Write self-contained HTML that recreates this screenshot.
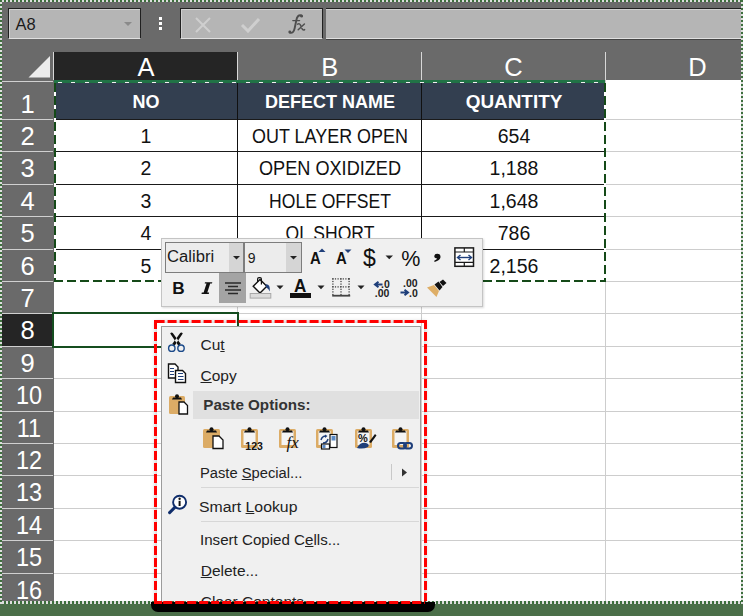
<!DOCTYPE html>
<html><head><meta charset="utf-8">
<style>
*{margin:0;padding:0;box-sizing:border-box}
html,body{width:743px;height:616px;overflow:hidden;background:#4b6f49;font-family:"Liberation Sans",sans-serif}
.a{position:absolute}
#shot{position:absolute;left:0;top:0;width:743px;height:604px;background:#6a6a6a;overflow:hidden}
</style></head><body>
<div id="shot">
<div class="a" style="left:2px;top:2px;width:739px;height:50px;background:#6a6a6a;"></div>
<div class="a" style="left:8px;top:8px;width:133px;height:31px;background:#b5b5b5;border:1px solid #202020;border-bottom:1px solid #e0e0e0;box-shadow:inset 1px 1px 0 #cfcfcf"></div>
<div class="a" style="left:15.50px;top:16.03px;font-size:16.5px;line-height:16.5px;color:#1a1a1a;font-weight:400;white-space:nowrap;">A8</div>
<svg class="a" style="left:123px;top:21px" width="10" height="6"><polygon points="1,1 9,1 5,5" fill="#8a8a8a"/></svg>
<div class="a" style="left:158.8px;top:16.5px;width:3.4px;height:3.4px;background:#ffffff;"></div>
<div class="a" style="left:158.8px;top:21.8px;width:3.4px;height:3.4px;background:#ffffff;"></div>
<div class="a" style="left:158.8px;top:27px;width:3.4px;height:3.4px;background:#ffffff;"></div>
<div class="a" style="left:180px;top:8px;width:143px;height:31px;background:#b5b5b5;border:1px solid #202020;border-bottom:1px solid #e0e0e0;box-shadow:inset 1px 1px 0 #cfcfcf"></div>
<svg class="a" style="left:194px;top:17px" width="18" height="16"><path d="M2,1 L16,15 M16,1 L2,15" stroke="#cfcfcf" stroke-width="2"/></svg>
<svg class="a" style="left:240px;top:17px" width="21" height="16"><path d="M2,8 L8,14 L19,2" stroke="#cfcfcf" stroke-width="3" fill="none"/></svg>
<svg class="a" style="left:284px;top:12px" width="24" height="24"><g fill="none" stroke="#4e4e4e" stroke-linecap="round"><path d="M17.6,3.4 C14.5,2.4 12.8,5 12.3,8.5 L10.6,16.5 C9.9,19.8 8.4,21.6 5.6,20.6" stroke-width="1.9"/><path d="M8.8,8.6 H15.6" stroke-width="1.3"/><path d="M13.6,12.2 Q15.6,11 16.6,13.4 L18.2,16.8 Q19.2,18.6 20.6,17.6 M20.4,12 L14.2,17.8" stroke-width="1.5"/></g><circle cx="17.6" cy="4.2" r="1.4" fill="#4e4e4e"/><circle cx="5.8" cy="19.8" r="1.4" fill="#4e4e4e"/></svg>
<div class="a" style="left:326px;top:8px;width:415px;height:31px;background:#b5b5b5;border-top:1px solid #202020;border-bottom:1px solid #e0e0e0;box-shadow:inset 0 1px 0 #cfcfcf"></div>
<div class="a" style="left:326px;top:39px;width:415px;height:1px;background:#444;"></div>
<div class="a" style="left:2px;top:52px;width:739px;height:28px;background:#6a6a6a;"></div>
<div class="a" style="left:54px;top:52px;width:183px;height:28px;background:#252525;"></div>
<div class="a" style="left:53px;top:52px;width:1px;height:28px;background:#d8d8d8;"></div>
<div class="a" style="left:237px;top:52px;width:1px;height:28px;background:#d8d8d8;"></div>
<div class="a" style="left:421px;top:52px;width:1px;height:28px;background:#d8d8d8;"></div>
<div class="a" style="left:605px;top:52px;width:1px;height:28px;background:#d8d8d8;"></div>
<div class="a" style="left:-54.00px;top:54.81px;width:400px;text-align:center;font-size:25.5px;line-height:25.5px;color:#ffffff;font-weight:400;white-space:nowrap;">A</div>
<div class="a" style="left:129.80px;top:54.81px;width:400px;text-align:center;font-size:25.5px;line-height:25.5px;color:#ffffff;font-weight:400;white-space:nowrap;">B</div>
<div class="a" style="left:313.50px;top:54.81px;width:400px;text-align:center;font-size:25.5px;line-height:25.5px;color:#ffffff;font-weight:400;white-space:nowrap;">C</div>
<div class="a" style="left:497.50px;top:54.81px;width:400px;text-align:center;font-size:25.5px;line-height:25.5px;color:#ffffff;font-weight:400;white-space:nowrap;">D</div>
<svg class="a" style="left:24px;top:55px" width="28" height="25"><polygon points="26,1 26,22.5 4.5,22.5" fill="#ececec"/></svg>
<div class="a" style="left:2px;top:80px;width:51px;height:524px;background:#6a6a6a;"></div>
<div class="a" style="left:2px;top:81px;width:51px;height:1px;background:#d0d0d0;"></div>
<div class="a" style="left:54px;top:80px;width:687px;height:524px;background:#ffffff;"></div>
<div class="a" style="left:-172.50px;top:91.61px;width:400px;text-align:center;font-size:25.5px;line-height:25.5px;color:#ffffff;font-weight:400;white-space:nowrap;">1</div>
<div class="a" style="left:2px;top:119px;width:51px;height:1px;background:#d0d0d0;"></div>
<div class="a" style="left:54px;top:119px;width:687px;height:1px;background:#cdcdcd;"></div>
<div class="a" style="left:-172.50px;top:124.01px;width:400px;text-align:center;font-size:25.5px;line-height:25.5px;color:#ffffff;font-weight:400;white-space:nowrap;">2</div>
<div class="a" style="left:2px;top:151px;width:51px;height:1px;background:#d0d0d0;"></div>
<div class="a" style="left:54px;top:151px;width:687px;height:1px;background:#cdcdcd;"></div>
<div class="a" style="left:-172.50px;top:156.41px;width:400px;text-align:center;font-size:25.5px;line-height:25.5px;color:#ffffff;font-weight:400;white-space:nowrap;">3</div>
<div class="a" style="left:2px;top:184px;width:51px;height:1px;background:#d0d0d0;"></div>
<div class="a" style="left:54px;top:184px;width:687px;height:1px;background:#cdcdcd;"></div>
<div class="a" style="left:-172.50px;top:188.81px;width:400px;text-align:center;font-size:25.5px;line-height:25.5px;color:#ffffff;font-weight:400;white-space:nowrap;">4</div>
<div class="a" style="left:2px;top:216px;width:51px;height:1px;background:#d0d0d0;"></div>
<div class="a" style="left:54px;top:216px;width:687px;height:1px;background:#cdcdcd;"></div>
<div class="a" style="left:-172.50px;top:221.21px;width:400px;text-align:center;font-size:25.5px;line-height:25.5px;color:#ffffff;font-weight:400;white-space:nowrap;">5</div>
<div class="a" style="left:2px;top:249px;width:51px;height:1px;background:#d0d0d0;"></div>
<div class="a" style="left:54px;top:249px;width:687px;height:1px;background:#cdcdcd;"></div>
<div class="a" style="left:-172.50px;top:253.61px;width:400px;text-align:center;font-size:25.5px;line-height:25.5px;color:#ffffff;font-weight:400;white-space:nowrap;">6</div>
<div class="a" style="left:2px;top:281px;width:51px;height:1px;background:#d0d0d0;"></div>
<div class="a" style="left:54px;top:281px;width:687px;height:1px;background:#cdcdcd;"></div>
<div class="a" style="left:-172.50px;top:286.01px;width:400px;text-align:center;font-size:25.5px;line-height:25.5px;color:#ffffff;font-weight:400;white-space:nowrap;">7</div>
<div class="a" style="left:2px;top:313px;width:51px;height:1px;background:#d0d0d0;"></div>
<div class="a" style="left:54px;top:313px;width:687px;height:1px;background:#cdcdcd;"></div>
<div class="a" style="left:2px;top:314px;width:50px;height:32px;background:#252525;"></div>
<div class="a" style="left:-172.50px;top:318.41px;width:400px;text-align:center;font-size:25.5px;line-height:25.5px;color:#ffffff;font-weight:400;white-space:nowrap;">8</div>
<div class="a" style="left:2px;top:346px;width:51px;height:1px;background:#d0d0d0;"></div>
<div class="a" style="left:54px;top:346px;width:687px;height:1px;background:#cdcdcd;"></div>
<div class="a" style="left:-172.50px;top:350.81px;width:400px;text-align:center;font-size:25.5px;line-height:25.5px;color:#ffffff;font-weight:400;white-space:nowrap;">9</div>
<div class="a" style="left:2px;top:378px;width:51px;height:1px;background:#d0d0d0;"></div>
<div class="a" style="left:54px;top:378px;width:687px;height:1px;background:#cdcdcd;"></div>
<div class="a" style="left:-171.50px;top:383.21px;width:400px;text-align:center;font-size:25.5px;line-height:25.5px;color:#ffffff;font-weight:400;white-space:nowrap;transform:scaleX(0.92);transform-origin:center 0;">10</div>
<div class="a" style="left:2px;top:411px;width:51px;height:1px;background:#d0d0d0;"></div>
<div class="a" style="left:54px;top:411px;width:687px;height:1px;background:#cdcdcd;"></div>
<div class="a" style="left:-171.50px;top:415.61px;width:400px;text-align:center;font-size:25.5px;line-height:25.5px;color:#ffffff;font-weight:400;white-space:nowrap;transform:scaleX(0.92);transform-origin:center 0;">11</div>
<div class="a" style="left:2px;top:443px;width:51px;height:1px;background:#d0d0d0;"></div>
<div class="a" style="left:54px;top:443px;width:687px;height:1px;background:#cdcdcd;"></div>
<div class="a" style="left:-171.50px;top:448.01px;width:400px;text-align:center;font-size:25.5px;line-height:25.5px;color:#ffffff;font-weight:400;white-space:nowrap;transform:scaleX(0.92);transform-origin:center 0;">12</div>
<div class="a" style="left:2px;top:475px;width:51px;height:1px;background:#d0d0d0;"></div>
<div class="a" style="left:54px;top:475px;width:687px;height:1px;background:#cdcdcd;"></div>
<div class="a" style="left:-171.50px;top:480.41px;width:400px;text-align:center;font-size:25.5px;line-height:25.5px;color:#ffffff;font-weight:400;white-space:nowrap;transform:scaleX(0.92);transform-origin:center 0;">13</div>
<div class="a" style="left:2px;top:508px;width:51px;height:1px;background:#d0d0d0;"></div>
<div class="a" style="left:54px;top:508px;width:687px;height:1px;background:#cdcdcd;"></div>
<div class="a" style="left:-171.50px;top:512.81px;width:400px;text-align:center;font-size:25.5px;line-height:25.5px;color:#ffffff;font-weight:400;white-space:nowrap;transform:scaleX(0.92);transform-origin:center 0;">14</div>
<div class="a" style="left:2px;top:540px;width:51px;height:1px;background:#d0d0d0;"></div>
<div class="a" style="left:54px;top:540px;width:687px;height:1px;background:#cdcdcd;"></div>
<div class="a" style="left:-171.50px;top:545.21px;width:400px;text-align:center;font-size:25.5px;line-height:25.5px;color:#ffffff;font-weight:400;white-space:nowrap;transform:scaleX(0.92);transform-origin:center 0;">15</div>
<div class="a" style="left:2px;top:573px;width:51px;height:1px;background:#d0d0d0;"></div>
<div class="a" style="left:54px;top:573px;width:687px;height:1px;background:#cdcdcd;"></div>
<div class="a" style="left:-171.50px;top:577.61px;width:400px;text-align:center;font-size:25.5px;line-height:25.5px;color:#ffffff;font-weight:400;white-space:nowrap;transform:scaleX(0.92);transform-origin:center 0;">16</div>
<div class="a" style="left:2px;top:605px;width:51px;height:1px;background:#d0d0d0;"></div>
<div class="a" style="left:54px;top:605px;width:687px;height:1px;background:#cdcdcd;"></div>
<div class="a" style="left:237px;top:80px;width:1px;height:524px;background:#cdcdcd;"></div>
<div class="a" style="left:421px;top:80px;width:1px;height:524px;background:#cdcdcd;"></div>
<div class="a" style="left:605px;top:80px;width:1px;height:524px;background:#cdcdcd;"></div>
<div class="a" style="left:54px;top:80px;width:551px;height:39px;background:#333f50;"></div>
<div class="a" style="left:54px;top:119px;width:551px;height:1px;background:#1a1a1a;"></div>
<div class="a" style="left:54px;top:151px;width:551px;height:1px;background:#1a1a1a;"></div>
<div class="a" style="left:54px;top:184px;width:551px;height:1px;background:#1a1a1a;"></div>
<div class="a" style="left:54px;top:216px;width:551px;height:1px;background:#1a1a1a;"></div>
<div class="a" style="left:54px;top:249px;width:551px;height:1px;background:#1a1a1a;"></div>
<div class="a" style="left:237px;top:80px;width:1px;height:201px;background:#111;"></div>
<div class="a" style="left:421px;top:80px;width:1px;height:201px;background:#111;"></div>
<div class="a" style="left:-54.00px;top:92.56px;width:400px;text-align:center;font-size:18px;line-height:18px;color:#ffffff;font-weight:700;white-space:nowrap;">NO</div>
<div class="a" style="left:130.00px;top:92.56px;width:400px;text-align:center;font-size:18px;line-height:18px;color:#ffffff;font-weight:700;white-space:nowrap;">DEFECT NAME</div>
<div class="a" style="left:314.30px;top:92.56px;width:400px;text-align:center;font-size:18px;line-height:18px;color:#ffffff;font-weight:700;white-space:nowrap;transform:scaleX(1.05);transform-origin:center 0;">QUANTITY</div>
<div class="a" style="left:-54.00px;top:126.99px;width:400px;text-align:center;font-size:19.5px;line-height:19.5px;color:#111;font-weight:400;white-space:nowrap;">1</div>
<div class="a" style="left:130.00px;top:126.99px;width:400px;text-align:center;font-size:19.5px;line-height:19.5px;color:#111;font-weight:400;white-space:nowrap;transform:scaleX(0.92);transform-origin:center 0;">OUT LAYER OPEN</div>
<div class="a" style="left:314.00px;top:126.99px;width:400px;text-align:center;font-size:19.5px;line-height:19.5px;color:#111;font-weight:400;white-space:nowrap;">654</div>
<div class="a" style="left:-54.00px;top:159.39px;width:400px;text-align:center;font-size:19.5px;line-height:19.5px;color:#111;font-weight:400;white-space:nowrap;">2</div>
<div class="a" style="left:130.00px;top:159.39px;width:400px;text-align:center;font-size:19.5px;line-height:19.5px;color:#111;font-weight:400;white-space:nowrap;transform:scaleX(0.93);transform-origin:center 0;">OPEN OXIDIZED</div>
<div class="a" style="left:314.00px;top:159.39px;width:400px;text-align:center;font-size:19.5px;line-height:19.5px;color:#111;font-weight:400;white-space:nowrap;">1,188</div>
<div class="a" style="left:-54.00px;top:191.79px;width:400px;text-align:center;font-size:19.5px;line-height:19.5px;color:#111;font-weight:400;white-space:nowrap;">3</div>
<div class="a" style="left:130.00px;top:191.79px;width:400px;text-align:center;font-size:19.5px;line-height:19.5px;color:#111;font-weight:400;white-space:nowrap;transform:scaleX(0.9);transform-origin:center 0;">HOLE OFFSET</div>
<div class="a" style="left:314.00px;top:191.79px;width:400px;text-align:center;font-size:19.5px;line-height:19.5px;color:#111;font-weight:400;white-space:nowrap;">1,648</div>
<div class="a" style="left:-54.00px;top:224.19px;width:400px;text-align:center;font-size:19.5px;line-height:19.5px;color:#111;font-weight:400;white-space:nowrap;">4</div>
<div class="a" style="left:130.00px;top:224.19px;width:400px;text-align:center;font-size:19.5px;line-height:19.5px;color:#111;font-weight:400;white-space:nowrap;transform:scaleX(0.9);transform-origin:center 0;">OL SHORT</div>
<div class="a" style="left:314.00px;top:224.19px;width:400px;text-align:center;font-size:19.5px;line-height:19.5px;color:#111;font-weight:400;white-space:nowrap;">786</div>
<div class="a" style="left:-54.00px;top:256.59px;width:400px;text-align:center;font-size:19.5px;line-height:19.5px;color:#111;font-weight:400;white-space:nowrap;">5</div>
<div class="a" style="left:130.00px;top:256.59px;width:400px;text-align:center;font-size:19.5px;line-height:19.5px;color:#111;font-weight:400;white-space:nowrap;transform:scaleX(0.9);transform-origin:center 0;">OL SHORT</div>
<div class="a" style="left:314.00px;top:256.59px;width:400px;text-align:center;font-size:19.5px;line-height:19.5px;color:#111;font-weight:400;white-space:nowrap;">2,156</div>
<div class="a" style="left:54px;top:80px;width:551px;height:3px;background:#217346"></div>
<div class="a" style="left:54px;top:82px;width:551px;height:1px;background:repeating-linear-gradient(90deg,transparent 0 4px,#f0f0f0 4px 8px,transparent 8px 13.4px)"></div>
<div class="a" style="left:54px;top:83px;width:2px;height:199px;background:repeating-linear-gradient(180deg,#154a18 0 9.5px,#ffffff 9.5px 13px)"></div>
<div class="a" style="left:604px;top:83px;width:2px;height:199px;background:repeating-linear-gradient(180deg,#154a18 0 9.5px,#ffffff 9.5px 13px)"></div>
<div class="a" style="left:54px;top:280px;width:552px;height:2px;background:repeating-linear-gradient(90deg,#154a18 0 9.5px,#ffffff 9.5px 13px)"></div>
<div class="a" style="left:52px;top:312px;width:187px;height:36px;border:2px solid #154d1f"></div>
<div class="a" style="left:161px;top:238px;width:322px;height:69px;background:#f0f0f0;border:1px solid #c4c4c4;box-shadow:1px 1px 2px rgba(0,0,0,0.15)"></div>
<div class="a" style="left:165px;top:242px;width:79px;height:31px;background:#ececec;border:1px solid #7d7d7d"></div>
<div class="a" style="left:229px;top:243px;width:14px;height:29px;background:#d5d5d5;"></div>
<svg class="a" style="left:232px;top:255px" width="9" height="6"><polygon points="1,1 8,1 4.5,4.5" fill="#222"/></svg>
<div class="a" style="left:167.30px;top:249.46px;font-size:16px;line-height:16px;color:#1a1a1a;font-weight:400;white-space:nowrap;transform:scaleX(1.04);transform-origin:left 0;">Calibri</div>
<div class="a" style="left:244px;top:242px;width:58px;height:31px;background:#ececec;border:1px solid #7d7d7d"></div>
<div class="a" style="left:286px;top:243px;width:15px;height:29px;background:#d5d5d5;"></div>
<svg class="a" style="left:289px;top:255px" width="9" height="6"><polygon points="1,1 8,1 4.5,4.5" fill="#222"/></svg>
<div class="a" style="left:247.80px;top:250.95px;font-size:14px;line-height:14px;color:#1a1a1a;font-weight:400;white-space:nowrap;">9</div>
<div class="a" style="left:310.00px;top:250.66px;font-size:16px;line-height:16px;color:#111;font-weight:700;white-space:nowrap;transform:scaleX(0.93);transform-origin:left 0;">A</div>
<svg class="a" style="left:318px;top:248px" width="8" height="5"><polygon points="0.5,4 7.5,4 4,0.5" fill="#1f3f7a"/></svg>
<div class="a" style="left:336.20px;top:251.06px;font-size:16px;line-height:16px;color:#111;font-weight:700;white-space:nowrap;transform:scaleX(0.93);transform-origin:left 0;">A</div>
<svg class="a" style="left:344px;top:249px" width="8" height="5"><polygon points="0.5,0.5 7.5,0.5 4,4" fill="#1f3f7a"/></svg>
<div class="a" style="left:363.00px;top:247.03px;font-size:23px;line-height:23px;color:#111;font-weight:400;white-space:nowrap;">$</div>
<svg class="a" style="left:385px;top:255px" width="9" height="5"><polygon points="0.5,0.5 8,0.5 4.25,4.2" fill="#222"/></svg>
<div class="a" style="left:401.30px;top:248.60px;font-size:21.5px;line-height:21.5px;color:#111;font-weight:400;white-space:nowrap;">%</div>
<svg class="a" style="left:432px;top:253px" width="10" height="10"><path d="M5,0.8 Q8.8,0.6 8.5,4.2 Q8.1,7.4 2.6,8.9 L2.2,7.8 Q5,6.6 5.2,5.5 Q2.1,5.3 2.3,3 Q2.6,0.9 5,0.8 Z" fill="#111"/></svg>
<svg class="a" style="left:454px;top:247px" width="21" height="21"><rect x="0.9" y="0.9" width="18.6" height="18.4" fill="#fff" stroke="#1a1a1a" stroke-width="1.5"/><path d="M1,5 H20 M1,15.3 H20 M10.3,1 V5 M10.3,15.3 V20" stroke="#1a1a1a" stroke-width="1.2"/><path d="M4,10.5 H17" stroke="#1f3f7a" stroke-width="1.4"/><path d="M6.5,8 L3.5,10.5 L6.5,13 M14.5,8 L17.5,10.5 L14.5,13" stroke="#1f3f7a" stroke-width="1.4" fill="none"/></svg>
<div class="a" style="left:172.30px;top:279.64px;font-size:17.2px;line-height:17.2px;color:#111;font-weight:700;white-space:nowrap;">B</div>
<svg class="a" style="left:200px;top:281px" width="13" height="15"><path d="M5,1.2 H12.3 L12,2.6 H10.2 L7.3,11.6 H9.1 L8.8,13 H1.5 L1.8,11.6 H3.6 L6.5,2.6 H4.7 Z" fill="#111"/></svg>
<div class="a" style="left:219px;top:273px;width:27px;height:30px;background:#a4a4a4;"></div>
<svg class="a" style="left:224px;top:281px" width="18" height="14"><path d="M1,2 H17 M4,5.5 H14 M1,9 H17 M4,12.5 H14" stroke="#2a2a2a" stroke-width="1.5"/></svg>
<svg class="a" style="left:249px;top:276px" width="23" height="24"><path d="M11,3.5 L17.8,10.2 L11,17 L4.2,10.2 Z" fill="#fff" stroke="#111" stroke-width="1.4"/><path d="M8.6,6 L8.6,3 Q8.6,1.6 10,1.6 L11,1.6 Q12.4,1.6 12.4,3 L12.4,8.5" fill="none" stroke="#111" stroke-width="1.2"/><path d="M16.5,8.2 Q21.5,7.5 20.8,15.5 Q19.5,12.5 17.2,11.5 Z" fill="#1f3f7a"/><rect x="1.2" y="17.5" width="20.6" height="4.6" fill="#dcdcdc" stroke="#a8a8a8" stroke-width="1"/></svg>
<svg class="a" style="left:276px;top:285px" width="9" height="5"><polygon points="0.5,0.5 7.5,0.5 4,4.3" fill="#222"/></svg>
<div class="a" style="left:294.20px;top:276.76px;font-size:18px;line-height:18px;color:#111;font-weight:700;white-space:nowrap;transform:scaleX(0.95);transform-origin:left 0;">A</div>
<div class="a" style="left:290px;top:293px;width:21px;height:5px;background:#111;"></div>
<svg class="a" style="left:317px;top:285px" width="9" height="5"><polygon points="0.5,0.5 7.5,0.5 4,4.3" fill="#222"/></svg>
<svg class="a" style="left:332px;top:278px" width="19" height="19"><g fill="#333"><rect x="0.3" y="0.3" width="1.2" height="1.2"/><rect x="0.3" y="0.3" width="1.2" height="1.2"/><rect x="16.5" y="0.3" width="1.2" height="1.2"/><rect x="0.3" y="8.3" width="1.2" height="1.2"/><rect x="8.4" y="0.3" width="1.2" height="1.2"/><rect x="2.9" y="0.3" width="1.2" height="1.2"/><rect x="0.3" y="2.9" width="1.2" height="1.2"/><rect x="16.5" y="2.9" width="1.2" height="1.2"/><rect x="2.9" y="8.3" width="1.2" height="1.2"/><rect x="8.4" y="2.9" width="1.2" height="1.2"/><rect x="5.5" y="0.3" width="1.2" height="1.2"/><rect x="0.3" y="5.5" width="1.2" height="1.2"/><rect x="16.5" y="5.5" width="1.2" height="1.2"/><rect x="5.5" y="8.3" width="1.2" height="1.2"/><rect x="8.4" y="5.5" width="1.2" height="1.2"/><rect x="8.1" y="0.3" width="1.2" height="1.2"/><rect x="0.3" y="8.1" width="1.2" height="1.2"/><rect x="16.5" y="8.1" width="1.2" height="1.2"/><rect x="8.1" y="8.3" width="1.2" height="1.2"/><rect x="8.4" y="8.1" width="1.2" height="1.2"/><rect x="10.7" y="0.3" width="1.2" height="1.2"/><rect x="0.3" y="10.7" width="1.2" height="1.2"/><rect x="16.5" y="10.7" width="1.2" height="1.2"/><rect x="10.7" y="8.3" width="1.2" height="1.2"/><rect x="8.4" y="10.7" width="1.2" height="1.2"/><rect x="13.3" y="0.3" width="1.2" height="1.2"/><rect x="0.3" y="13.3" width="1.2" height="1.2"/><rect x="16.5" y="13.3" width="1.2" height="1.2"/><rect x="13.3" y="8.3" width="1.2" height="1.2"/><rect x="8.4" y="13.3" width="1.2" height="1.2"/><rect x="15.9" y="0.3" width="1.2" height="1.2"/><rect x="0.3" y="15.9" width="1.2" height="1.2"/><rect x="16.5" y="15.9" width="1.2" height="1.2"/><rect x="15.9" y="8.3" width="1.2" height="1.2"/><rect x="8.4" y="15.9" width="1.2" height="1.2"/><rect x="16.5" y="0.3" width="1.2" height="1.2"/></g><rect x="0.2" y="16.8" width="18" height="1.8" fill="#444"/></svg>
<svg class="a" style="left:357px;top:285px" width="9" height="5"><polygon points="0.5,0.5 7.5,0.5 4,4.3" fill="#222"/></svg>
<svg class="a" style="left:373px;top:281px" width="10" height="7"><path d="M9.5,3.5 H3 M5.5,0.8 L2,3.5 L5.5,6.2" stroke="#1f3f7a" stroke-width="2" fill="none"/></svg>
<div class="a" style="left:381.00px;top:278.61px;font-size:10.5px;line-height:10.5px;color:#222;font-weight:700;white-space:nowrap;">.0</div>
<div class="a" style="left:374.80px;top:288.11px;font-size:10.5px;line-height:10.5px;color:#222;font-weight:700;white-space:nowrap;">.00</div>
<div class="a" style="left:403.00px;top:278.41px;font-size:10.5px;line-height:10.5px;color:#222;font-weight:700;white-space:nowrap;">.00</div>
<svg class="a" style="left:400px;top:289px" width="10" height="7"><path d="M0.5,3.5 H7 M4.5,0.8 L8,3.5 L4.5,6.2" stroke="#1f3f7a" stroke-width="2" fill="none"/></svg>
<div class="a" style="left:409.00px;top:288.11px;font-size:10.5px;line-height:10.5px;color:#222;font-weight:700;white-space:nowrap;">.0</div>
<svg class="a" style="left:426px;top:279px" width="22" height="19"><path d="M1,8.5 L8,6 L13,12 L10.5,18 Z" fill="#deae66"/><path d="M8.5,5.5 L12.5,2.5 L16.5,8 L13.5,11.5 Z" fill="#111"/><path d="M13.5,3 L17,0.5 L20.5,4 L17,7 Z" fill="#111"/></svg>
<div class="a" style="left:157px;top:323px;width:267px;height:290px;box-shadow:0 0 4px 2px rgba(0,0,0,0.18)"></div>
<div class="a" style="left:161px;top:326px;width:260px;height:290px;background:#f0f0f0;border:1px solid #9c9c9c"></div>
<div class="a" style="left:193px;top:391px;width:226px;height:28px;background:#e0e0e0;"></div>
<div class="a" style="left:201px;top:487px;width:218px;height:1px;background:#d7d7d7;"></div>
<div class="a" style="left:201px;top:521px;width:218px;height:1px;background:#d7d7d7;"></div>
<div class="a" style="left:391px;top:464px;width:1px;height:16px;background:#c8c8c8;"></div>
<svg class="a" style="left:401px;top:468px" width="7" height="9"><polygon points="1,0.5 6,4.5 1,8.5" fill="#333"/></svg>
<div class="a" style="left:200.50px;top:337.28px;font-size:15.5px;line-height:15.5px;color:#222;font-weight:400;white-space:nowrap;">Cu<u>t</u></div>
<div class="a" style="left:200.50px;top:368.38px;font-size:15.5px;line-height:15.5px;color:#222;font-weight:400;white-space:nowrap;"><u>C</u>opy</div>
<div class="a" style="left:203.30px;top:396.83px;font-size:15.2px;line-height:15.2px;color:#333;font-weight:700;white-space:nowrap;">Paste Options:</div>
<div class="a" style="left:199.50px;top:465.48px;font-size:15.5px;line-height:15.5px;color:#222;font-weight:400;white-space:nowrap;transform:scaleX(0.95);transform-origin:left 0;">Paste <u>S</u>pecial...</div>
<div class="a" style="left:199.40px;top:498.68px;font-size:15.5px;line-height:15.5px;color:#222;font-weight:400;white-space:nowrap;transform:scaleX(1.02);transform-origin:left 0;">Smart <u>L</u>ookup</div>
<div class="a" style="left:199.60px;top:532.38px;font-size:15.5px;line-height:15.5px;color:#222;font-weight:400;white-space:nowrap;transform:scaleX(0.975);transform-origin:left 0;">Insert Copied C<u>e</u>lls...</div>
<div class="a" style="left:200.70px;top:562.68px;font-size:15.5px;line-height:15.5px;color:#222;font-weight:400;white-space:nowrap;"><u>D</u>elete...</div>
<div class="a" style="left:200.70px;top:594.38px;font-size:15.5px;line-height:15.5px;color:#222;font-weight:400;white-space:nowrap;">Clear Contents</div>
<svg class="a" style="left:162px;top:328px" width="30" height="30"><path d="M8.2,5.4 Q9.3,4 10.8,4.9 L18.8,16 L16.4,17.8 Z M20.8,5.4 Q19.7,4 18.2,4.9 L10.2,16 L12.6,17.8 Z" fill="#111"/><circle cx="9.8" cy="20.2" r="3.2" fill="none" stroke="#1b4a8a" stroke-width="1.4"/><circle cx="19.0" cy="20.2" r="3.2" fill="none" stroke="#1b4a8a" stroke-width="1.4"/></svg>
<svg class="a" style="left:167px;top:363px" width="21" height="21"><path d="M1.5,1 H8 L11,4 V15 H1.5 Z" fill="#fff" stroke="#111" stroke-width="1.4"/><path d="M3,5.5 H7 M3,8.5 H7 M3,11.5 H7" stroke="#1f3f7a" stroke-width="1.2"/><path d="M8.5,7.5 H15.5 L18.5,10.5 V19.5 H8.5 Z" fill="#fff" stroke="#111" stroke-width="1.4"/><path d="M11,10.5 H16 M11,13.5 H16.5 M11,16.5 H16.5" stroke="#1f3f7a" stroke-width="1.2"/></svg>
<svg class="a" style="left:168px;top:393px" width="26" height="25"><rect x="1" y="3" width="16" height="18" rx="1.5" fill="#dcac66"/><path d="M4,6.5 H14 L13,4.5 H5 Z" fill="#111"/><circle cx="9.0" cy="3.2" r="2" fill="#111"/><path d="M11,9 H16 L19.5,12.5 V21 H11 Z" fill="#fff" stroke="#111" stroke-width="1.3"/></svg>
<svg class="a" style="left:202px;top:426px" width="27" height="26"><rect x="1" y="3" width="17" height="19" rx="1.5" fill="#dcac66"/><path d="M4,6.5 H15 L14,4.5 H5 Z" fill="#111"/><circle cx="9.5" cy="3.2" r="2" fill="#111"/><path d="M11,10 H17 L21,14 V22.5 H11 Z" fill="#fff" stroke="#111" stroke-width="1.3"/></svg>
<svg class="a" style="left:240px;top:426px" width="27" height="26"><rect x="1" y="3" width="17" height="19" rx="1.5" fill="#dcac66"/><rect x="3.5" y="5" width="12" height="14" fill="#f4f4f4"/><path d="M4,6.5 H15 L14,4.5 H5 Z" fill="#111"/><circle cx="9.5" cy="3.2" r="2" fill="#111"/></svg>
<div class="a" style="left:245.30px;top:440.71px;font-size:10.5px;line-height:10.5px;color:#111;font-weight:700;white-space:nowrap;">123</div>
<svg class="a" style="left:278px;top:426px" width="27" height="26"><rect x="1" y="3" width="17" height="19" rx="1.5" fill="#dcac66"/><rect x="3.5" y="5" width="12" height="14" fill="#f4f4f4"/><path d="M4,6.5 H15 L14,4.5 H5 Z" fill="#111"/><circle cx="9.5" cy="3.2" r="2" fill="#111"/></svg>
<div class="a" style="left:286.50px;top:433.61px;font-size:17px;line-height:17px;color:#111;font-weight:400;white-space:nowrap;font-family:'Liberation Serif',serif;"><i>fx</i></div>
<svg class="a" style="left:315px;top:426px" width="27" height="26"><rect x="1" y="3" width="17" height="19" rx="1.5" fill="#dcac66"/><rect x="3.5" y="5" width="12" height="14" fill="#f4f4f4"/><path d="M4,6.5 H15 L14,4.5 H5 Z" fill="#111"/><circle cx="9.5" cy="3.2" r="2" fill="#111"/><path d="M6,14 Q7,10 11,10" fill="none" stroke="#1f3f7a" stroke-width="1.5"/><path d="M10,8.5 L12.5,10 L10,12" fill="#1f3f7a"/><path d="M13,13 Q12,17 8,17" fill="none" stroke="#1f3f7a" stroke-width="1.5"/><rect x="15" y="8.5" width="7" height="13" fill="#fff" stroke="#111" stroke-width="1.2"/><rect x="16.5" y="10" width="4" height="4.5" fill="#5a8ac6"/><rect x="6.5" y="18" width="8" height="5" fill="#fff" stroke="#111" stroke-width="1.2"/><rect x="7.5" y="19" width="3" height="3" fill="#5a8ac6"/></svg>
<svg class="a" style="left:354px;top:426px" width="27" height="26"><rect x="1" y="3" width="17" height="19" rx="1.5" fill="#dcac66"/><rect x="3.5" y="5" width="12" height="14" fill="#f4f4f4"/><path d="M4,6.5 H15 L14,4.5 H5 Z" fill="#111"/><circle cx="9.5" cy="3.2" r="2" fill="#111"/><text x="4" y="16" font-family="Liberation Sans" font-weight="700" font-size="11" fill="#111">%</text><path d="M15,16 L21,8 L22.5,9.5 L17,17 Z" fill="#111"/><path d="M3,22 Q6,16 12,17 Q16,18 14,21 Q9,23.5 3,22 Z" fill="#1f3f7a"/></svg>
<svg class="a" style="left:391px;top:426px" width="27" height="26"><rect x="1" y="3" width="17" height="19" rx="1.5" fill="#dcac66"/><rect x="3.5" y="5" width="12" height="14" fill="#f4f4f4"/><path d="M4,6.5 H15 L14,4.5 H5 Z" fill="#111"/><circle cx="9.5" cy="3.2" r="2" fill="#111"/><rect x="7" y="17" width="8" height="5.5" rx="2.7" fill="none" stroke="#1f3f7a" stroke-width="2"/><rect x="13" y="17" width="8" height="5.5" rx="2.7" fill="none" stroke="#1f3f7a" stroke-width="2"/></svg>
<svg class="a" style="left:165px;top:492px" width="24" height="24"><circle cx="14.6" cy="10.2" r="6.5" fill="#fff" stroke="#0f2d6b" stroke-width="1.9"/><path d="M4.6,20.6 L9.8,15.4" stroke="#0f2d6b" stroke-width="3" stroke-linecap="round"/><circle cx="14.6" cy="6.8" r="1.2" fill="#111"/><path d="M14.6,8.8 V14" stroke="#111" stroke-width="2"/></svg>
<div class="a" style="left:154px;top:320px;width:273px;height:3px;background:repeating-linear-gradient(90deg,#ff0000 0 8.9px,transparent 8.9px 11.88px);background-position:1.6px 0"></div>
<div class="a" style="left:154px;top:320px;width:3px;height:284px;background:repeating-linear-gradient(180deg,#ff0000 0 8.9px,transparent 8.9px 11.88px)"></div>
<div class="a" style="left:424px;top:320px;width:3px;height:284px;background:repeating-linear-gradient(180deg,#ff0000 0 8.9px,transparent 8.9px 11.88px)"></div>
</div>
<div class="a" style="left:0;top:0;width:743px;height:2px;background:repeating-linear-gradient(90deg,#3d6f3d 0 2px,#dedede 2px 4px)"></div>
<div class="a" style="left:0;top:601px;width:743px;height:3px;background:repeating-linear-gradient(90deg,#3d6f3d 0 2px,#dedede 2px 4px)"></div>
<div class="a" style="left:0;top:0;width:2px;height:604px;background:repeating-linear-gradient(180deg,#3d6f3d 0 2px,#dedede 2px 4px)"></div>
<div class="a" style="left:741px;top:0;width:2px;height:604px;background:repeating-linear-gradient(180deg,#3d6f3d 0 2px,#dedede 2px 4px)"></div>
<div class="a" style="left:151px;top:602px;width:284px;height:10px;background:#000;border-radius:0 0 7px 7px"></div>
<div class="a" style="left:154px;top:601px;width:271px;height:3px;background:repeating-linear-gradient(90deg,#ff0000 0 8.9px,transparent 8.9px 11.88px);background-position:9.18px 0"></div>
</body></html>
